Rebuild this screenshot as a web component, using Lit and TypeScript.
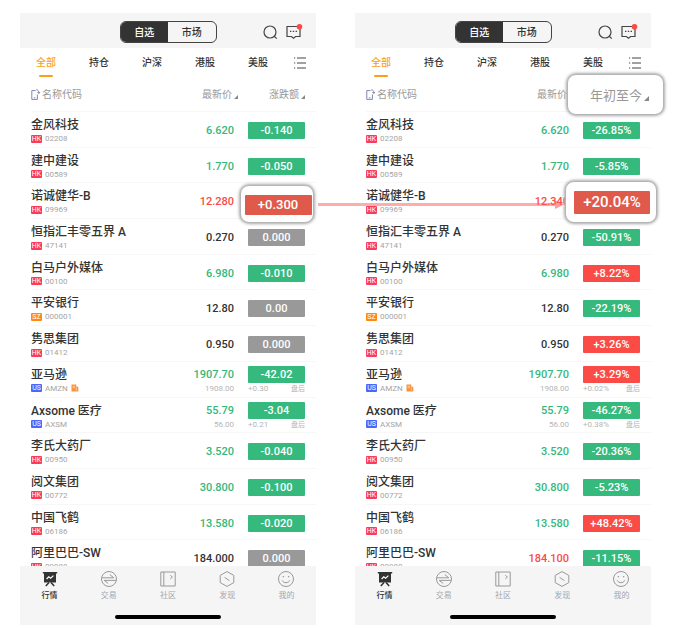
import { LitElement, html, css, svg, nothing } from "lit";
import { customElement, property } from "lit/decorators.js";
import { classMap } from "lit/directives/class-map.js";

type Tone = "up" | "down" | "flat";
interface Quote {
  name: string;
  market: "HK" | "SZ" | "US";
  code: string;
  price: string;
  tone: Tone;
  change: string;
  badge: Tone;
  after?: [string, string];
  note?: boolean;
  callout?: "small" | "large";
}

const stocks: [string, Quote["market"], string][] = [
  ["金风科技", "HK", "02208"],
  ["建中建设", "HK", "00589"],
  ["诺诚健华-B", "HK", "09969"],
  ["恒指汇丰零五界 A", "HK", "47141"],
  ["白马户外媒体", "HK", "00100"],
  ["平安银行", "SZ", "000001"],
  ["隽思集团", "HK", "01412"],
  ["亚马逊", "US", "AMZN"],
  ["Axsome 医疗", "US", "AXSM"],
  ["李氏大药厂", "HK", "00950"],
  ["阅文集团", "HK", "00772"],
  ["中国飞鹤", "HK", "06186"],
  ["阿里巴巴-SW", "HK", "09988"],
];

type Figures = [string, Tone, string, Tone];
const byAmount: Figures[] = [
  ["6.620", "down", "-0.140", "down"],
  ["1.770", "down", "-0.050", "down"],
  ["12.280", "up", "+0.300", "up"],
  ["0.270", "flat", "0.000", "flat"],
  ["6.980", "down", "-0.010", "down"],
  ["12.80", "flat", "0.00", "flat"],
  ["0.950", "flat", "0.000", "flat"],
  ["1907.70", "down", "-42.02", "down"],
  ["55.79", "down", "-3.04", "down"],
  ["3.520", "down", "-0.040", "down"],
  ["30.800", "down", "-0.100", "down"],
  ["13.580", "down", "-0.020", "down"],
  ["184.000", "flat", "0.000", "flat"],
];
const byYear: Figures[] = [
  ["6.620", "down", "-26.85%", "down"],
  ["1.770", "down", "-5.85%", "down"],
  ["12.340", "up", "+20.04%", "up"],
  ["0.270", "flat", "-50.91%", "down"],
  ["6.980", "down", "+8.22%", "up"],
  ["12.80", "flat", "-22.19%", "down"],
  ["0.950", "flat", "+3.26%", "up"],
  ["1907.70", "down", "+3.29%", "up"],
  ["55.79", "down", "-46.27%", "down"],
  ["3.520", "down", "-20.36%", "down"],
  ["30.800", "down", "-5.23%", "down"],
  ["13.580", "down", "+48.42%", "up"],
  ["184.100", "up", "-11.15%", "down"],
];

function quotes(figures: Figures[], after: string[], callout: "small" | "large"): Quote[] {
  return stocks.map(([name, market, code], i) => {
    const [price, tone, change, badge] = figures[i];
    return {
      name, market, code, price, tone, change, badge,
      after: i === 7 ? ["1908.00", after[0]] : i === 8 ? ["56.00", after[1]] : undefined,
      note: i === 7,
      callout: i === 2 ? callout : undefined,
    };
  });
}

const navItems = [
  {
    label: "行情",
    icon: svg`<path d="M.8 1h14.4v1.6h-1.2v8.8H2V2.6H.8z" fill="#333"/><path d="M4.6 8l2.2-2.2 1.8 1.4 2.8-2.6" stroke="#fff" stroke-width="1.2"/><path d="M7 11.4L3.8 15M9 11.4l3.2 3.6" stroke="#333" stroke-width="1.5"/>`,
  },
  {
    label: "交易",
    icon: svg`<circle cx="8" cy="8" r="7.5"/><path d="M.8 6.8h12L8.8 3.6M15.2 9.4h-12l4 3"/>`,
  },
  {
    label: "社区",
    icon: svg`<path d="M.8 1h14.4v14H.8zM3.8 1v14M10.3 4.2L12.4 6l-2.1 1.9"/>`,
  },
  {
    label: "发现",
    icon: svg`<path d="M8 .6l6.8 3.8v7.2L8 15.4l-6.8-3.8V4.4zM5.6 6.4l4.8 3.2"/>`,
  },
  {
    label: "我的",
    icon: svg`<circle cx="8" cy="8" r="7.5"/><path d="M4.2 9.3c1.4 3.2 6.2 3.2 7.6 0"/><path d="M5.4 5v1.2M10.6 5v1.2" stroke-width="1.3"/>`,
  },
];

@customElement("quote-phone")
export class QuotePhone extends LitElement {
  @property({ attribute: false }) rows: Quote[] = [];
  @property() sort = "";
  @property({ type: Boolean }) highlight = false;

  static styles = css`
    :host { display: block; background: #fff; color: #333; }
    button {
      appearance: none; border: 0; margin: 0; padding: 0; background: none;
      font: inherit; color: inherit; cursor: pointer;
    }
    svg { display: block; fill: none; }
    .top {
      display: grid; grid-template-columns: 1fr 97px 1fr; align-items: center;
      height: 35px; padding: 0 13px; background: #f5f5f5;
    }
    .switch {
      grid-column: 2; display: flex; height: 22px; box-sizing: border-box;
      border: 1px solid #444; border-radius: 6px; overflow: hidden;
      font-size: 10px; font-weight: 500; margin-top: 2px;
    }
    .switch button { flex: 1; }
    .switch .on { background: #333; color: #fff; }
    .tools { display: flex; justify-content: flex-end; gap: 8px; margin-top: 2px; }
    .tabs {
      display: flex; align-items: stretch; gap: 26px;
      height: 30px; padding: 0 10px 0 16px; font-size: 10px; font-weight: 500;
    }
    .groups { flex: 1; display: flex; justify-content: space-between; }
    .tab { position: relative; line-height: 14px; padding: 7px 0 9px; }
    .tab.on { color: #fb9f1b; }
    .tab.on::after {
      content: ""; position: absolute; left: 3px; right: 3px; bottom: 1px;
      height: 2px; border-radius: 1px; background: #fb9f1b;
    }
    .sheet { height: 488px; }
    table, thead { display: block; }
    tbody { display: grid; grid-auto-rows: 1fr; height: 464px; }
    tr {
      display: grid; grid-template-columns: 1fr auto 57px; column-gap: 14px;
      margin-left: 11px; padding-right: 11px; box-sizing: border-box;
      border-bottom: 1px solid #f7f7f7;
    }
    th, td { display: block; padding: 0; text-align: left; position: relative; }
    thead tr { height: 34px; column-gap: 10px; }
    th { font-size: 10px; line-height: 32px; font-weight: 400; color: #999; }
    th button { display: inline-flex; align-items: center; gap: 2px; }
    th.num { text-align: right; }
    .mark { width: 4px; height: 4px; margin-top: 6px; }
    .stock { padding-top: 4px; }
    .name {
      font-family: Roboto, "Noto Sans CJK SC", sans-serif;
      font-size: 12px; line-height: 18px; font-weight: 500; white-space: nowrap;
    }
    .ident { display: flex; align-items: center; gap: 3px; height: 9px; font: 8px/9px Roboto, sans-serif; color: #a5a5a5; }
    .tag { width: 11px; height: 8px; border-radius: 1px; font-size: 7px; line-height: 8px; text-align: center; color: #fff; }
    .HK { background: #fb3b5a; }
    .SZ { background: #ff8a12; }
    .US { background: #4968f8; }
    .price, .move { font-family: Roboto, "Noto Sans CJK SC", sans-serif; font-size: 11px; font-weight: 500; padding-top: 10px; }
    .price { text-align: right; line-height: 18px; }
    .move { line-height: 18px; }
    .after { padding-top: 4px; }
    .badge { display: block; height: 17px; border-radius: 1px; text-align: center; color: #fff; }
    .price.up { color: #f84c46; }
    .price.down { color: #36b87c; }
    .badge.up { background: #fb4b46; }
    .badge.down { background: #36b97c; }
    .badge.flat { background: #999; }
    .sub { display: flex; justify-content: space-between; font-size: 8px; line-height: 10px; font-weight: 400; color: #b5b5b5; }
    .price .sub { justify-content: flex-end; }
    .move .sub { padding-top: 1px; }
    .session { font-size: 7px; }
    .callout {
      position: absolute; z-index: 3; display: flex; align-items: center; justify-content: center;
      box-sizing: border-box; border: 1px solid #b5b5b5; border-radius: 9px; background: #fff;
      box-shadow: 0 0 3px 1px #aaa;
    }
    .callout .badge { background: #e05a4b; display: grid; place-items: center; }
    .small { left: -8px; top: 2px; width: 74px; height: 38px; padding: 2px 0 0 2px; font-size: 13px; }
    .small .badge { width: 67px; height: 20px; }
    .large { left: -18px; top: -2px; width: 92px; height: 42px; padding-left: 2px; font-size: 15px; }
    .large .badge { width: 76px; height: 23px; }
    .period { right: -24px; top: -4px; width: 97px; height: 41px; padding-left: 8px; font-size: 13px; line-height: 20px; }
    .period .mark { width: 5px; height: 5px; margin-top: 8px; }
    .nav { position: relative; z-index: 1; height: 59px; background: #f5f5f5; }
    .items { display: grid; grid-template-columns: repeat(5, 1fr); }
    .item {
      display: flex; flex-direction: column; align-items: center; gap: 2px;
      padding-top: 5px; font-size: 8px; line-height: 12px; color: #a3a7b0;
    }
    .item.on { color: #333; font-weight: 500; }
    .home { width: 36%; height: 4px; margin: 14px auto 0; border-radius: 2px; background: #000; }
  `;

  private mark() {
    return html`<svg class="mark" viewBox="0 0 4 4" aria-hidden="true"><path d="M4 0v4H0z" fill="#888"/></svg>`;
  }

  private move(q: Quote) {
    const badge = html`<span class="badge ${q.badge}">${q.change}</span>`;
    return q.callout ? html`<div class="callout ${q.callout}">${badge}</div>` : badge;
  }

  private row(q: Quote) {
    const after = !!q.after;
    return html`<tr>
      <td class="stock">
        <div class="name">${q.name}</div>
        <div class="ident">
          <span class="tag ${q.market}">${q.market}</span><span>${q.code}</span>
          ${q.note
            ? html`<svg width="8" height="8" viewBox="0 0 8 8" aria-hidden="true"><path d="M.5.5h4.8v2.2h2v4.8H.5z" fill="#f8923a"/><path d="M1.6 2.2h2.6M1.6 3.7h2.6M5.3 3.6v3" stroke="#fff" stroke-width=".5"/></svg>`
            : nothing}
        </div>
      </td>
      <td class=${classMap({ price: true, [q.tone]: true, after })}>
        ${q.price}${q.after ? html`<div class="sub">${q.after[0]}</div>` : nothing}
      </td>
      <td class=${classMap({ move: true, after })}>
        ${this.move(q)}
        ${q.after
          ? html`<div class="sub"><span>${q.after[1]}</span><span class="session">盘后</span></div>`
          : nothing}
      </td>
    </tr>`;
  }

  render() {
    return html`
      <header class="top">
        <div class="switch"><button class="on">自选</button><button>市场</button></div>
        <div class="tools">
          <button aria-label="搜索">
            <svg width="15" height="16" viewBox="0 0 15 16" stroke="#444" stroke-width="1.2"><circle cx="7" cy="8" r="6"/><path d="M11.2 12.2l2.6 2.4"/></svg>
          </button>
          <button aria-label="消息">
            <svg width="17" height="16" viewBox="0 0 17 16" stroke="#444" stroke-width="1.2"><path d="M1 2.5h13v10H9.6l-2.1 1.8-2.1-1.8H1z"/><path d="M4 7.4h1.4M6.8 7.4h1.4M9.6 7.4H11" stroke-width="1.4"/><circle cx="13.5" cy="2.8" r="2.8" fill="#fb4b46" stroke="none"/></svg>
          </button>
        </div>
      </header>
      <nav class="tabs">
        <div class="groups">
          ${["全部", "持仓", "沪深", "港股", "美股"].map(
            (t, i) => html`<button class=${classMap({ tab: true, on: i === 0 })}>${t}</button>`,
          )}
        </div>
        <button aria-label="分组">
          <svg width="12" height="12" viewBox="0 0 12 12" stroke="#444" stroke-width="1.2"><path d="M3 1h9M3 6h9M3 11h9M0 1h1.2M0 6h1.2M0 11h1.2"/></svg>
        </button>
      </nav>
      <div class="sheet">
        <table>
          <thead>
            <tr>
              <th><button>
                <svg width="9" height="11" viewBox="0 0 9 11" stroke="#7477a8" stroke-width=".9"><path d="M4.5 1.6H.8v8.8h5.6V5.5M2.8 8.8h1.6M5.2.8C7 .8 7.8 1.8 7.8 4.2M6.4 3l1.4 1.5L9 3"/></svg>名称代码</button></th>
              <th class="num"><button>最新价${this.mark()}</button></th>
              <th class="num">${this.highlight
                ? html`<button class="callout period">${this.sort}${this.mark()}</button>`
                : html`<button>${this.sort}${this.mark()}</button>`}</th>
            </tr>
          </thead>
          <tbody>${this.rows.map((q) => this.row(q))}</tbody>
        </table>
      </div>
      <footer class="nav">
        <div class="items">
          ${navItems.map(
            (n, i) => html`<button class=${classMap({ item: true, on: i === 0 })}>
              <svg width="16" height="16" viewBox="0 0 16 16" stroke=${i ? "#999" : "none"}>${n.icon}</svg>${n.label}
            </button>`,
          )}
        </div>
        <div class="home"></div>
      </footer>
    `;
  }
}

@customElement("app-root")
export class AppRoot extends LitElement {
  static styles = css`
    :host {
      display: block; background: #fff;
      font-family: Inter, "Noto Sans CJK SC", sans-serif;
    }
    .stage { display: flex; gap: 39px; padding: 13px 35px 3px 20px; }
    .pane { flex: 1; min-width: 0; position: relative; }
    .arrow {
      position: absolute; z-index: 2; top: 187px; left: calc(100% + 2px);
      width: calc(100% - 50px); height: 9px; display: flex; align-items: center;
    }
    .line { flex: 1; height: 3px; background: #ff5a5a; opacity: 0.5; }
    .head { display: block; opacity: 0.6; }
  `;

  render() {
    return html`<main class="stage">
      <div class="pane">
        <quote-phone .rows=${quotes(byAmount, ["+0.30", "+0.21"], "small")} sort="涨跌额"></quote-phone>
        <div class="arrow">
          <div class="line"></div>
          <svg class="head" width="9" height="9" viewBox="0 0 9 9"><path d="M0 0l9 4.5L0 9z" fill="#ff5a5a"/></svg>
        </div>
      </div>
      <div class="pane">
        <quote-phone .rows=${quotes(byYear, ["+0.02%", "+0.38%"], "large")} sort="年初至今" highlight></quote-phone>
      </div>
    </main>`;
  }
}
